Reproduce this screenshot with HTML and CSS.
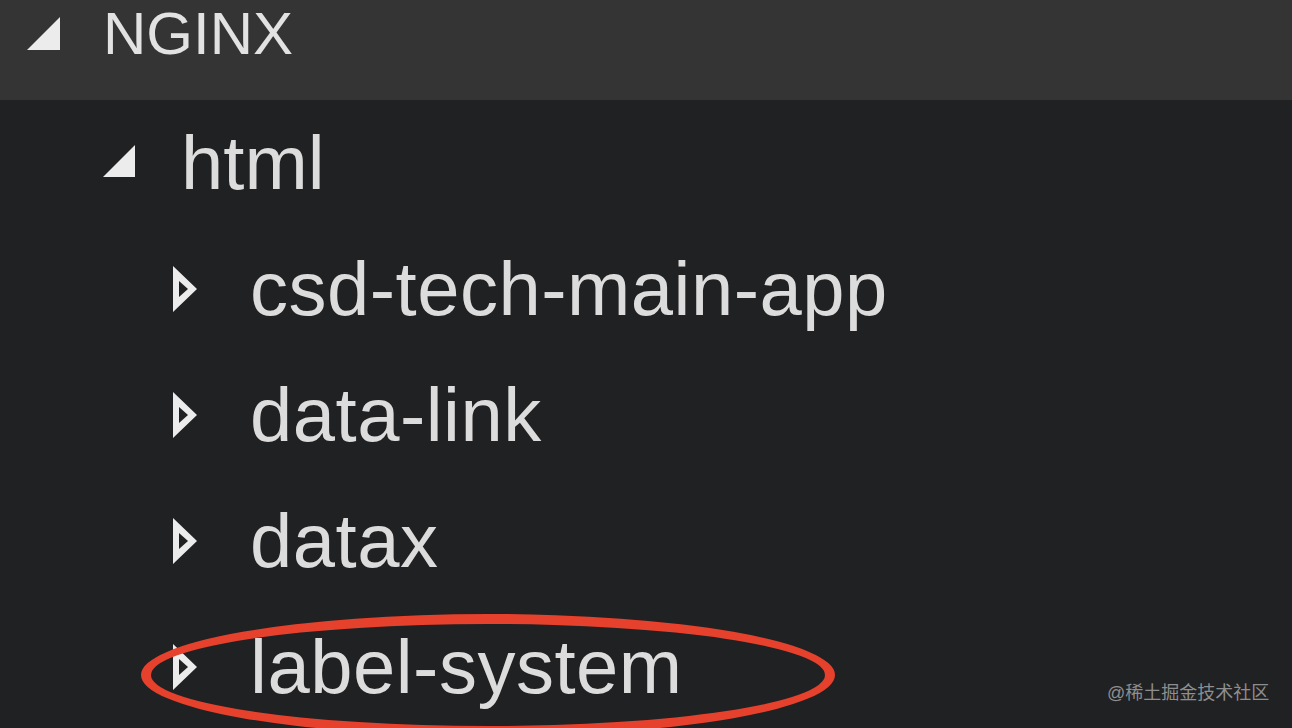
FILE: index.html
```html
<!DOCTYPE html>
<html lang="zh">
<head>
<meta charset="utf-8">
<title>NGINX</title>
<link rel="stylesheet" href="styles.css">
</head>
<body>
<div class="page">
  <div class="header">
    <svg class="tri-open-lg" width="33" height="33" viewBox="0 0 33 33"><polygon points="0,33 33,0 33,33" fill="#ececec"/></svg>
    <span class="title">NGINX</span>
  </div>
  <div class="row row-html">
    <svg class="tri-open" width="32" height="32" viewBox="0 0 32 32"><polygon points="0,32 32,0 32,32" fill="#ececec"/></svg>
    <span class="label">html</span>
  </div>
  <div class="row row-child">
    <svg class="tri-closed" width="24" height="46" viewBox="0 0 24 46"><path fill-rule="evenodd" fill="#ececec" d="M0,0 L24,23 L0,46 Z M6,15 L15,23 L6,31 Z"/></svg>
    <span class="label">csd-tech-main-app</span>
  </div>
  <div class="row row-child">
    <svg class="tri-closed" width="24" height="46" viewBox="0 0 24 46"><path fill-rule="evenodd" fill="#ececec" d="M0,0 L24,23 L0,46 Z M6,15 L15,23 L6,31 Z"/></svg>
    <span class="label">data-link</span>
  </div>
  <div class="row row-child">
    <svg class="tri-closed" width="24" height="46" viewBox="0 0 24 46"><path fill-rule="evenodd" fill="#ececec" d="M0,0 L24,23 L0,46 Z M6,15 L15,23 L6,31 Z"/></svg>
    <span class="label">datax</span>
  </div>
  <div class="row row-child">
    <svg class="tri-closed" width="24" height="46" viewBox="0 0 24 46"><path fill-rule="evenodd" fill="#ececec" d="M0,0 L24,23 L0,46 Z M6,15 L15,23 L6,31 Z"/></svg>
    <span class="label">label-system</span>
  </div>
  <div class="circle"></div>
  <div class="watermark">@稀土掘金技术社区</div>
</div>
</body>
</html>
```
FILE: styles.css
```css
html, body {
  margin: 0;
  padding: 0;
  background: #202123;
  overflow: hidden;
}
.page {
  position: relative;
  width: 1292px;
  height: 728px;
  overflow: hidden;
  background: #202123;
  font-family: "Liberation Sans", Arial, sans-serif;
  color: #dedede;
}
.header {
  height: 100px;
  box-sizing: border-box;
  padding: 4px 0 0 27px;
  background: #343434;
  display: flex;
  align-items: flex-start;
}
.tri-open-lg {
  margin-top: 13px;
  flex: none;
}
.title {
  margin-left: 43px;
  font-size: 60px;
  line-height: 60px;
  color: #e2e2e2;
}
.row {
  height: 126px;
  display: flex;
  align-items: center;
}
.row-html {
  padding-left: 103px;
}
.row-html .tri-open {
  margin-top: -4px;
  flex: none;
}
.row-html .label {
  margin-left: 46px;
}
.row-child {
  padding-left: 173px;
}
.row-child .tri-closed {
  flex: none;
}
.row-child .label {
  margin-left: 53px;
  letter-spacing: 0.5px;
}
.label {
  font-size: 76px;
  line-height: 126px;
  color: #dcdcdc;
}
.circle {
  position: absolute;
  left: 141px;
  top: 614px;
  width: 694px;
  height: 122px;
  box-sizing: border-box;
  border: 10px solid #e5412c;
  border-radius: 50%;
}
.watermark {
  position: absolute;
  left: 1107px;
  top: 682px;
  font-family: "Liberation Sans", "Noto Sans CJK SC", sans-serif;
  font-size: 18px;
  line-height: 22px;
  color: #8e8e8e;
}
```
